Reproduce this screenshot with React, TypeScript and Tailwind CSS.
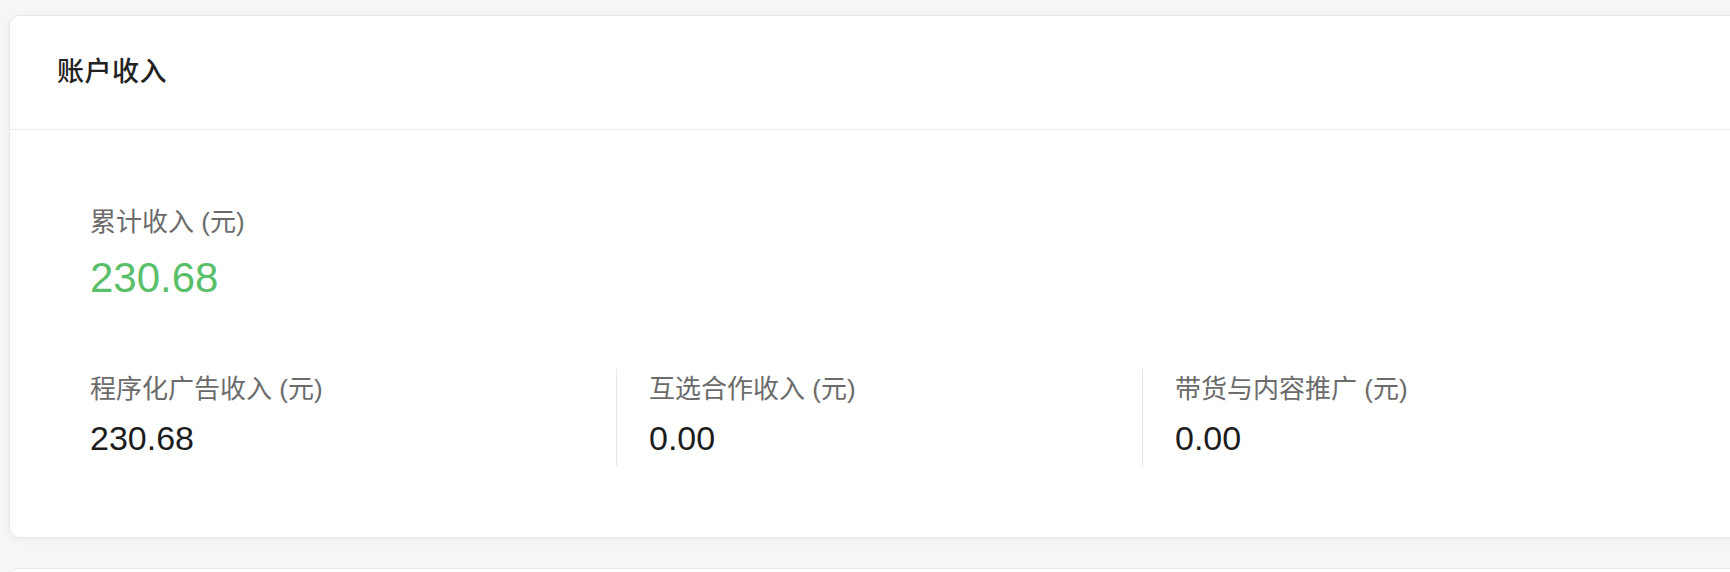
import React from "react";

const cjk = { fontFamily: '"Liberation Sans", "Noto Sans CJK SC", sans-serif' };

function Stat({ label, value, first }: { label: string; value: string; first?: boolean }) {
  return (
    <div
      className={
        "w-[526px] h-[97px] flex flex-col " +
        (first ? "" : "border-l border-[#e6e6e6] pl-[32px]")
      }
    >
      <div className="mt-[5px] text-[26px] leading-[30px] text-[#6b6b6b] whitespace-nowrap">{label}</div>
      <div className="mt-[14px] text-[34px] leading-[40px] text-[#1c1c1c] whitespace-nowrap">{value}</div>
    </div>
  );
}

export default function App() {
  return (
    <div className="w-[1730px] h-[572px] overflow-hidden bg-[#f5f6f8] pt-[15px] pl-[9px]" style={cjk}>
      <div className="w-[1800px] bg-white border border-[#e6e7e9] rounded-[10px] shadow-[0_2px_6px_rgba(0,0,0,0.05)]">
        <div className="h-[114px] px-[47px] flex items-center border-b border-[#ececec]">
          <div className="text-[27px] font-medium text-[#222] tracking-[0.5px]">账户收入</div>
        </div>
        <div className="pl-[80px] pt-[77px] pb-[71px]">
          <div className="text-[26px] leading-[30px] text-[#6b6b6b]">累计收入 (元)</div>
          <div className="mt-[17px] text-[42px] leading-[48px] text-[#5abf6a]">230.68</div>
          <div className="mt-[67px] flex">
            <Stat first label="程序化广告收入 (元)" value="230.68" />
            <Stat label="互选合作收入 (元)" value="0.00" />
            <Stat label="带货与内容推广 (元)" value="0.00" />
          </div>
        </div>
      </div>
      <div className="mt-[30px] w-[1800px] h-[100px] bg-white border border-[#e6e7e9] rounded-[10px]" />
    </div>
  );
}
